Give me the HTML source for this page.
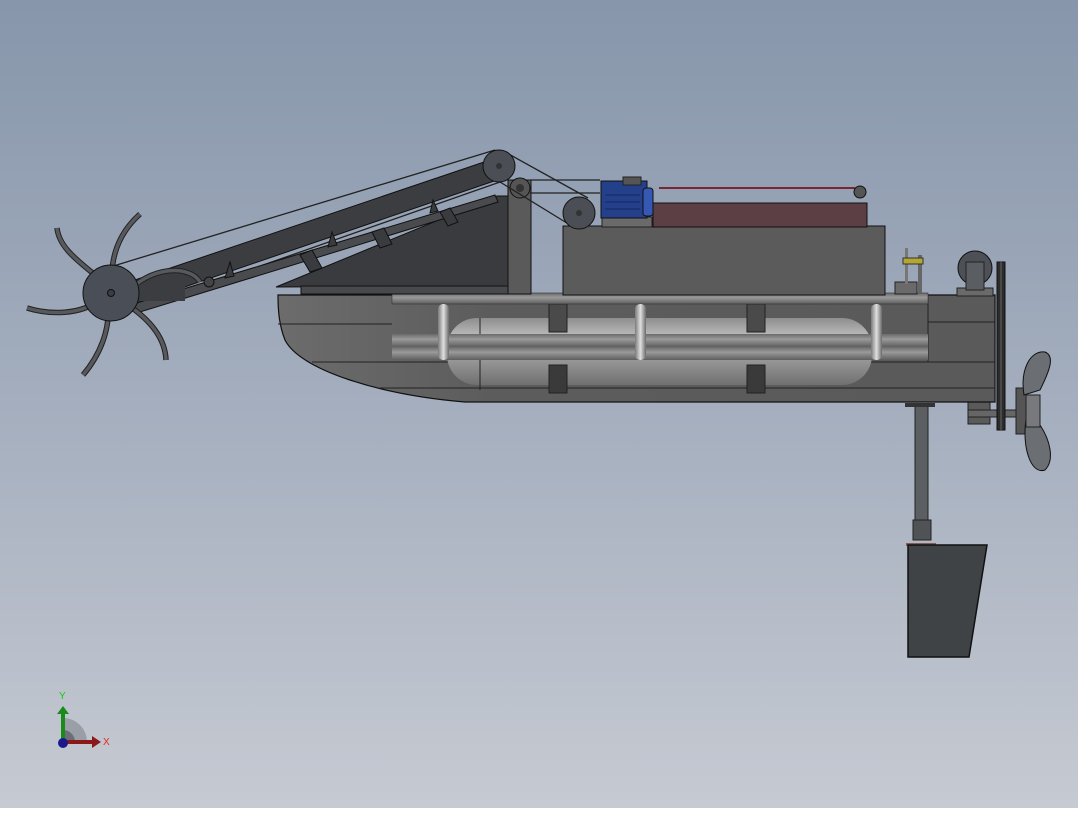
<!DOCTYPE html>
<html><head><style>
html,body{margin:0;padding:0;}
body{width:1078px;height:808px;overflow:hidden;}
</style></head><body>
<svg width="1078" height="808" viewBox="0 0 1078 808" xmlns="http://www.w3.org/2000/svg">
<defs>
<linearGradient id="bg" x1="0" y1="0" x2="0" y2="1">
<stop offset="0" stop-color="#8796ab"/><stop offset="0.5" stop-color="#a4aebe"/><stop offset="1" stop-color="#c6cad2"/>
</linearGradient>
<linearGradient id="hull" x1="0" y1="0" x2="1" y2="0">
<stop offset="0" stop-color="#6c6c6c"/><stop offset="0.3" stop-color="#5c5c5c"/><stop offset="1" stop-color="#5a5a5a"/>
</linearGradient>
<linearGradient id="pipe" x1="0" y1="0" x2="0" y2="1">
<stop offset="0" stop-color="#6a6a6a"/><stop offset="0.4" stop-color="#9a9a9a"/><stop offset="1" stop-color="#5e5e5e"/>
</linearGradient>
<linearGradient id="pont" x1="0" y1="0" x2="0" y2="1">
<stop offset="0" stop-color="#8e8e8e"/><stop offset="0.25" stop-color="#b8b8b8"/><stop offset="0.6" stop-color="#9a9a9a"/><stop offset="1" stop-color="#707070"/>
</linearGradient>
<linearGradient id="vp" x1="0" y1="0" x2="1" y2="0">
<stop offset="0" stop-color="#7a7a7a"/><stop offset="0.5" stop-color="#e0e0e0"/><stop offset="1" stop-color="#6a6a6a"/>
</linearGradient>
</defs>
<rect width="1078" height="808" fill="url(#bg)"/>

<rect x="915" y="405" width="13" height="130" fill="#5c5f62" stroke="#222" stroke-width="1"/>
<rect x="913" y="520" width="18" height="20" fill="#505356" stroke="#222"/>
<rect x="906" y="543" width="30" height="3" fill="#8a5a50"/>
<polygon points="908,545 987,545 969,657 908,657" fill="#404345" stroke="#111" stroke-width="1.5"/>
<rect x="905" y="403" width="30" height="4" fill="#333"/>

<rect x="968" y="402" width="22" height="22" fill="#5a5a5a" stroke="#222"/>
<rect x="968" y="410" width="50" height="7" fill="#666" stroke="#222"/>
<rect x="1016" y="388" width="10" height="46" fill="#555" stroke="#222"/>
<path d="M1024,395 C1020,370 1030,350 1045,352 C1055,356 1050,370 1040,390 Z" fill="#6b6e72" stroke="#111"/>
<path d="M1026,420 C1022,445 1030,475 1045,470 C1055,460 1050,440 1040,425 Z" fill="#6b6e72" stroke="#111"/>
<rect x="1026" y="395" width="14" height="32" fill="#77797c" stroke="#222"/>

<path d="M278,295 L995,295 L995,402 L465,402 C380,395 300,370 285,340 C279,325 278,310 278,295 Z" fill="url(#hull)" stroke="#111" stroke-width="1.2"/>
<line x1="278" y1="324" x2="392" y2="324" stroke="#222"/>
<line x1="928" y1="322" x2="995" y2="322" stroke="#222"/>
<line x1="312" y1="362" x2="995" y2="362" stroke="#222"/>
<line x1="380" y1="388" x2="995" y2="388" stroke="#222"/>
<line x1="928" y1="295" x2="928" y2="362" stroke="#222"/>

<rect x="447" y="318" width="425" height="67" rx="30" fill="url(#pont)"/>
<line x1="480" y1="318" x2="480" y2="390" stroke="#222"/>
<rect x="549" y="304" width="18" height="28" fill="#4a4a4a" stroke="#222"/>
<rect x="549" y="365" width="18" height="28" fill="#3a3a3a" stroke="#222"/>
<rect x="747" y="304" width="18" height="28" fill="#4a4a4a" stroke="#222"/>
<rect x="747" y="365" width="18" height="28" fill="#3a3a3a" stroke="#222"/>
<rect x="392" y="334" width="536" height="13" fill="url(#pipe)"/>
<rect x="392" y="347" width="536" height="13" fill="url(#pipe)"/>
<rect x="392" y="293" width="536" height="11" fill="url(#pipe)" stroke="#333" stroke-width="0.6"/>
<rect x="438" y="304" width="11" height="56" rx="5" fill="url(#vp)"/>
<rect x="635" y="304" width="11" height="56" rx="5" fill="url(#vp)"/>
<rect x="871" y="304" width="11" height="56" rx="5" fill="url(#vp)"/>

<rect x="563" y="226" width="322" height="69" fill="#5b5b5b" stroke="#111"/>
<rect x="653" y="203" width="214" height="24" fill="#5c3e45" stroke="#111"/>
<line x1="659" y1="188" x2="855" y2="188" stroke="#7a2530" stroke-width="2"/>
<circle cx="860" cy="192" r="6" fill="#555" stroke="#111"/>
<rect x="602" y="217" width="50" height="10" fill="#6a6a6a" stroke="#222"/>
<rect x="601" y="181" width="46" height="37" fill="#24408a" stroke="#111"/>
<rect x="643" y="188" width="10" height="28" rx="3" fill="#3558b5" stroke="#111"/>
<rect x="623" y="177" width="18" height="8" fill="#555" stroke="#222"/>
<line x1="605" y1="195" x2="640" y2="195" stroke="#142860"/>
<line x1="605" y1="202" x2="640" y2="202" stroke="#142860"/>
<line x1="605" y1="209" x2="640" y2="209" stroke="#142860"/>

<polygon points="276,287 497,196 508,196 508,286" fill="#3a3b3e" stroke="#111"/>
<rect x="301" y="286" width="207" height="8" fill="#48494c" stroke="#111"/>
<rect x="508" y="180" width="23" height="114" fill="#5a5a5a" stroke="#111"/>
<circle cx="520" cy="188" r="10" fill="#555" stroke="#111"/>
<circle cx="520" cy="188" r="4" fill="#333"/>

<g stroke="#222" stroke-width="1.3" fill="none">
<line x1="110" y1="267" x2="495" y2="150"/>
<line x1="112" y1="318" x2="500" y2="182"/>
<line x1="505" y1="152" x2="588" y2="198"/>
<line x1="500" y1="182" x2="575" y2="228"/>
<line x1="530" y1="180" x2="600" y2="180"/>
<line x1="530" y1="193" x2="600" y2="193"/>
</g>

<polygon points="120,285 490,160 503,178 132,305" fill="#3c3d40" stroke="#111"/>
<polygon points="130,305 495,195 498,202 140,312" fill="#4a4b4e" stroke="#111"/>
<g fill="#3a3b3e" stroke="#111">
<polygon points="300,255 312,250 322,268 310,272"/>
<polygon points="372,232 384,228 392,244 380,248"/>
<polygon points="440,212 450,208 458,222 448,226"/>
<polygon points="225,278 230,262 234,276"/>
<polygon points="328,247 332,232 337,245"/>
<polygon points="430,213 433,200 438,211"/>
</g>
<circle cx="209" cy="282" r="5" fill="#444" stroke="#111"/>

<circle cx="499" cy="166" r="16" fill="#4b4e55" stroke="#111"/>
<circle cx="499" cy="166" r="3" fill="#333"/>
<circle cx="579" cy="213" r="16" fill="#4b4e55" stroke="#111"/>
<circle cx="579" cy="213" r="3" fill="#333"/>

<g fill="none" stroke="#222" stroke-width="5.5">
<path d="M110,290 C95,270 60,255 57,228" />
<path d="M112,285 C110,255 120,232 140,214"/>
<path d="M125,295 C150,265 190,265 200,282"/>
<path d="M120,300 C145,315 165,335 166,360"/>
<path d="M108,305 C110,330 100,355 83,375"/>
<path d="M100,300 C80,315 50,315 27,308"/>
</g>
<g fill="none" stroke="#58595c" stroke-width="3.5">
<path d="M110,290 C95,270 60,255 57,228" />
<path d="M112,285 C110,255 120,232 140,214"/>
<path d="M125,295 C150,265 190,265 200,282"/>
<path d="M120,300 C145,315 165,335 166,360"/>
<path d="M108,305 C110,330 100,355 83,375"/>
<path d="M100,300 C80,315 50,315 27,308"/>
</g>
<rect x="125" y="285" width="60" height="16" fill="#3c3d40"/>
<circle cx="111" cy="293" r="28" fill="#4a4e56" stroke="#111"/>
<circle cx="111" cy="293" r="3.5" fill="#3a3d44" stroke="#111"/>

<rect x="895" y="282" width="22" height="12" fill="#6a6a6a" stroke="#222"/>
<rect x="905" y="248" width="3" height="36" fill="#777"/>
<rect x="918" y="255" width="4" height="38" fill="#666"/>
<rect x="903" y="258" width="20" height="6" fill="#b5a630" stroke="#333"/>
<rect x="957" y="288" width="36" height="8" fill="#6a6a6a" stroke="#222"/>
<circle cx="975" cy="268" r="17" fill="#4d5056" stroke="#111"/>
<rect x="966" y="262" width="18" height="28" fill="#5a5d62" stroke="#222"/>
<rect x="997" y="262" width="8" height="168" fill="#2c2c2c" stroke="#111"/>
<line x1="1001" y1="262" x2="1001" y2="430" stroke="#666"/>

<path d="M63,742 L63,718 A24,24 0 0 1 87,742 Z" fill="#9a9ea6"/>
<path d="M63,742 L63,730 A12,12 0 0 1 75,742 Z" fill="#6a6e76"/>
<rect x="61" y="712" width="4" height="30" fill="#1a8a1a"/>
<polygon points="57,714 63,706 69,714" fill="#1a8a1a"/>
<rect x="63" y="740" width="30" height="4" fill="#8a1a1a"/>
<polygon points="92,736 101,742 92,748" fill="#8a1a1a"/>
<circle cx="63" cy="743" r="5" fill="#1a1a8a"/>
<text x="59" y="699" font-family="Liberation Sans, sans-serif" font-size="10" fill="#1c1">Y</text>
<text x="103" y="745" font-family="Liberation Sans, sans-serif" font-size="10" fill="#e22">X</text>
</svg>
</body></html>
